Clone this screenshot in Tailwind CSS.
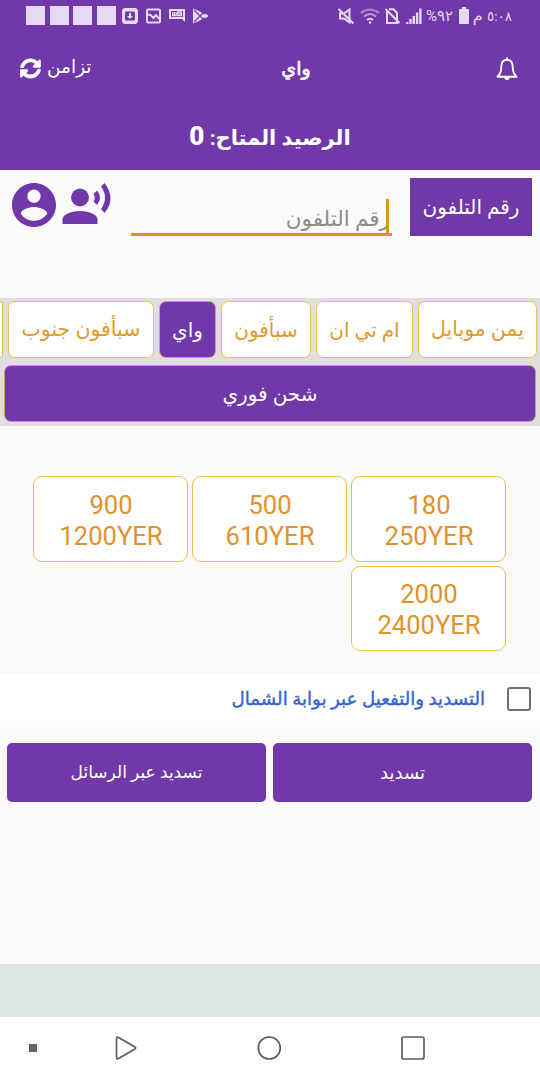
<!DOCTYPE html>
<html lang="ar">
<head>
<meta charset="utf-8">
<meta name="viewport" content="width=device-width, initial-scale=1">
<title>واي</title>
<script src="https://cdn.jsdelivr.net/npm/@tailwindcss/browser@4"></script>
</head>
<body class="w-[540px] h-[1080px] overflow-hidden bg-[#fafafa] font-['Roboto','DejaVu_Sans',sans-serif] flex flex-col">
<header class="h-[170px] shrink-0 bg-[#7038a9] text-white flex flex-col">
  <div class="h-[31px] flex items-center justify-between pl-[26px] pr-7 text-[#e6d9f3]">
    <div class="flex items-center">
      <div class="flex gap-[4.6px]"><i class="size-[19px] bg-current"></i><i class="size-[19px] bg-current"></i><i class="size-[19px] bg-current"></i><i class="size-[19px] bg-current"></i></div>
      <svg class="ml-[6px] w-4 h-4" viewBox="0 0 16 16"><path fill="currentColor" fill-rule="evenodd" d="M2 0h12l2 2v12l-2 2H2l-2-2V2zM4 3.500l-1 1v7l1 1h8l1-1v-7l-1-1z"/><path fill="currentColor" d="M7 5h2v3h2l-3 3-3-3h2z"/></svg>
      <svg class="ml-2 w-[15px] h-4" viewBox="0 0 15 16" fill="none" stroke="currentColor" stroke-width="2"><rect x="1" y="1.500" width="13" height="13" rx="1"/><path d="M2 6.500l2.500.5 3 3L10 7l3 4"/></svg>
      <svg class="ml-2 w-4 h-4" viewBox="0 0 16 16" fill="currentColor"><path fill-rule="evenodd" d="M0 1h16v13l-3-3H0zM2 3v6h12V3z"/><path fill="none" stroke="currentColor" stroke-width="1.300" d="M3.600 4v3.700h3.600V4M5.400 4v3.700M8.800 4h3.600v3.700H8.800zM8.800 5.800h3"/></svg>
      <svg class="ml-2 w-4 h-4" viewBox="0 0 16 16"><path fill="currentColor" d="M0 0.500L6 3l4 2.300 1 1.200 2-.7L15.500 8 13 10.200l-2-.7-1 1.200L6 13l-6 2.500z"/><path d="M1 2l9 9M1 14l9-9" stroke="#7038a9" stroke-width="1.100"/></svg>
    </div>
    <div class="flex items-center">
      <svg class="w-4 h-4" viewBox="0 0 16 16" fill="none" stroke="currentColor" stroke-width="2"><path d="M2 5.500h4l5.500-4v13L6 10.500H2zM.5 1l15 14.500"/></svg>
      <svg class="ml-[6px] w-5 h-4" viewBox="0 0 20 16" fill="none" stroke="currentColor" stroke-width="2"><path opacity=".5" d="M1 5q9-7 18 0"/><path opacity=".65" d="M4 8.500q6-5 12 0"/><path d="M7 12q3-2.500 6 0"/><circle cx="10" cy="14.500" r="1.300" fill="currentColor" stroke="none"/></svg>
      <svg class="ml-[5px] w-[15px] h-4" viewBox="0 0 15 16" fill="none" stroke="currentColor" stroke-width="2"><path d="M2 3v12h10V5L8.500 1.200H4M.5 1l14 14"/></svg>
      <svg class="ml-[6px] w-4 h-4" viewBox="0 0 16 16" fill="currentColor"><path d="M0 14h2.400v2H0zM3.300 11h2.400v5H3.300zM6.600 8H9v8H6.600zM9.900 4.500h2.400V16H9.900zM13.200 0.500h2.400V16h-2.400z"/></svg>
      <span class="w-[28px] ml-[4px] text-[15px] leading-4 whitespace-nowrap" dir="ltr">%٩٢</span>
      <svg class="ml-[5px] w-[10px] h-[17px]" viewBox="0 0 10 17" fill="currentColor"><path d="M3 0h4v2h2q1 0 1 1v13q0 1-1 1H1q-1 0-1-1V3q0-1 1-1h2z"/></svg>
      <span class="w-[38px] ml-[5px] text-[13.500px] leading-4 whitespace-nowrap [word-spacing:1px]" dir="rtl">٥:٠٨ <span class="text-[16px]">م</span></span>
    </div>
  </div>
  <div class="h-[72px] grid grid-cols-3 items-center px-5">
    <div class="flex items-center gap-[6px]">
      <svg class="mt-[2px] w-[21px] h-[21px]" viewBox="0 0 512 512" fill="white" stroke="white" stroke-width="14"><path d="M371 143c-31-30-72-46-115-46-78 0-145 53-163 127-1 5-6 9-12 9H24c-8 0-13-7-12-14C33 105 135 20 256 20c66 0 126 26 171 68l36-36c15-15 41-4 41 17v138c0 13-11 24-24 24H342c-21 0-32-26-17-41zM32 281h138c21 0 32 26 17 41l-42 42c31 30 72 46 115 46 78 0 145-53 163-127 1-5 6-9 12-9h57c8 0 13 7 12 14-21 114-123 204-244 204-66 0-126-26-171-68l-36 36C26 475 0 464 0 443V305c0-13 11-24 24-24z"/></svg>
      <span class="text-[18.500px] leading-6">تزامن</span>
    </div>
    <h1 class="mt-[3px] text-[19px] leading-6 font-normal [-webkit-text-stroke:0.7px_white] text-center pl-[52px]">واي</h1>
    <svg class="justify-self-end mr-[2px] mt-[4px] w-[22px] h-6" viewBox="0 0 22 24" fill="none" stroke="white" stroke-width="1.900" stroke-linejoin="round"><path d="M11 2.800q-5.500 0-5.700 7 0 6.500-3.800 9.900h19q-3.800-3.400-3.800-9.900-.2-7-5.700-7z"/><path d="M11 .5v3"/><path d="M8 20h6q-.5 3-3 3t-3-3z" fill="white" stroke="none"/></svg>
  </div>
  <div class="flex-1 flex items-center justify-center text-[21px] font-bold" dir="rtl"><span>الرصيد المتاح: <b class="text-[26px]">0</b></span></div>
</header>
<main class="h-[794px] shrink-0 flex flex-col">
  <section class="h-32 flex items-start pt-2 pl-3 pr-2">
    <svg class="mt-[5px] w-11 h-11" viewBox="2 2 20 20" fill="#7038a9"><path d="M12 2C6.480 2 2 6.480 2 12s4.480 10 10 10 10-4.480 10-10S17.520 2 12 2zm0 3c1.660 0 3 1.340 3 3s-1.340 3-3 3-3-1.340-3-3 1.340-3 3-3zm0 14.200c-2.500 0-4.710-1.280-6-3.220.03-1.990 4-3.080 6-3.080 1.990 0 5.970 1.090 6 3.080-1.290 1.940-3.500 3.220-6 3.220z"/></svg>
    <svg class="ml-[4px] w-[52px] h-[52px]" viewBox="0 0 52 52" fill="#7038a9"><circle cx="20" cy="19.500" r="9"/><path d="M2.500 46v-4.500C2.500 36 12 33 20 33s17.500 3 17.500 8.500V46z"/><path d="M37 12.500l-3.500 3.500q2.500 3.800 0 7.500L37 27q6-7.500 0-14.500z"/><path d="M44.500 5L41 8.500q8 11 0 22.500l3.500 4Q56.500 21 44.500 5z"/></svg>
    <div class="ml-[19px] w-[261px] h-[58px] border-b-3 border-[#dc9428] flex justify-end items-end">
      <span class="text-[21.500px] leading-7 text-[#8c8c8c] -mr-[4px]" dir="rtl">رقم التلفون</span><i class="w-[3px] h-[34px] bg-[#dc9428] mr-[3px]"></i>
    </div>
    <div class="ml-auto w-[122px] h-[58px] bg-[#7038a9] text-white text-[20px] flex items-center justify-center" dir="rtl"><span>رقم التلفون</span></div>
  </section>
  <section class="h-32 bg-[#e0dfdf] text-[20px] text-[#e09a2b]">
    <div class="h-[60px] pt-[3px] pr-[3px] flex justify-end gap-[5px] whitespace-nowrap">
      <div class="w-[3px] shrink-0 h-[57px] bg-white border border-l-0 border-[#eac14c] rounded-r-[7px]"></div>
      <div class="w-[146px] shrink-0 h-[57px] bg-white border border-[#eac14c] rounded-[7px] flex items-center justify-center"><span class="text-[20.500px]">سبأفون جنوب</span></div>
      <div class="w-[57px] shrink-0 h-[57px] bg-[#7038a9] border border-[#d8a070] rounded-[7px] text-white flex items-center justify-center"><span>واي</span></div>
      <div class="w-[90px] shrink-0 h-[57px] bg-white border border-[#eac14c] rounded-[7px] flex items-center justify-center"><span>سبأفون</span></div>
      <div class="w-[97px] shrink-0 h-[57px] bg-white border border-[#eac14c] rounded-[7px] flex items-center justify-center"><span>ام تي ان</span></div>
      <div class="w-[119px] shrink-0 h-[57px] bg-white border border-[#eac14c] rounded-[7px] flex items-center justify-center"><span class="text-[20.500px]">يمن موبايل</span></div>
    </div>
    <div class="mt-[7px] mx-1 h-[57px] bg-[#7038a9] border border-[#d69a64] rounded-[7px] text-white flex items-center justify-center"><span>شحن فوري</span></div>
  </section>
  <section class="h-[248px] pt-[50px] pl-[33px] pr-[34px] grid grid-cols-3 grid-rows-[86px_85px] gap-1 text-[25.600px] leading-[31px] text-center text-[#e0922c]" dir="rtl">
    <div class="bg-white border border-[#eac14c] rounded-[9px] pt-[13px] pl-px">180<br>250YER</div>
    <div class="bg-white border border-[#eac14c] rounded-[9px] pt-[13px] pl-px">500<br>610YER</div>
    <div class="bg-white border border-[#eac14c] rounded-[9px] pt-[13px] pl-px">900<br>1200YER</div>
    <div class="bg-white border border-[#eac14c] rounded-[9px] pt-[12px] pl-px">2000<br>2400YER</div>
  </section>
  <section class="h-[53px] bg-white flex items-center justify-end gap-[22px] pr-[9px] pb-[3px]">
    <span class="text-[18.200px] [-webkit-text-stroke:0.4px_#3565cc] text-[#3565cc] whitespace-nowrap" dir="rtl">التسديد والتفعيل عبر بوابة الشمال</span>
    <i class="size-6 border-[2.5px] border-[#6f6f6f] rounded-[3px]"></i>
  </section>
  <section class="pt-4 pl-[7px] pr-2 grid grid-cols-2 gap-[7px] text-[17px] text-white">
    <div class="h-[59px] bg-[#7038a9] rounded-[5px] flex items-center justify-center"><span>تسديد عبر الرسائل</span></div>
    <div class="h-[59px] bg-[#7038a9] rounded-[5px] flex items-center justify-center"><span class="text-[18px]">تسديد</span></div>
  </section>
</main>
<div class="h-[53px] shrink-0 bg-[#dde5e4]"></div>
<nav class="h-[63px] shrink-0 bg-white flex items-center pl-[29px] pb-px">
  <i class="size-2 bg-[#626262]"></i>
  <svg class="ml-[78px] w-[22px] h-6" viewBox="0 0 22 24" fill="none" stroke="#5c5c5c" stroke-width="1.700"><path d="M1.500 2.500q0-2 2-1L20 11q1.200 1 0 2L3.500 22.500q-2 1-2-1z"/></svg>
  <svg class="ml-[120px] w-6 h-6" viewBox="0 0 24 24" fill="none" stroke="#5c5c5c" stroke-width="1.700"><circle cx="12.300" cy="12" r="11"/></svg>
  <svg class="ml-[120px] w-6 h-6" viewBox="0 0 24 24" fill="none" stroke="#5c5c5c" stroke-width="1.700"><rect x="1" y="1" width="22" height="22" rx="2"/></svg>
</nav>
</body>
</html>
